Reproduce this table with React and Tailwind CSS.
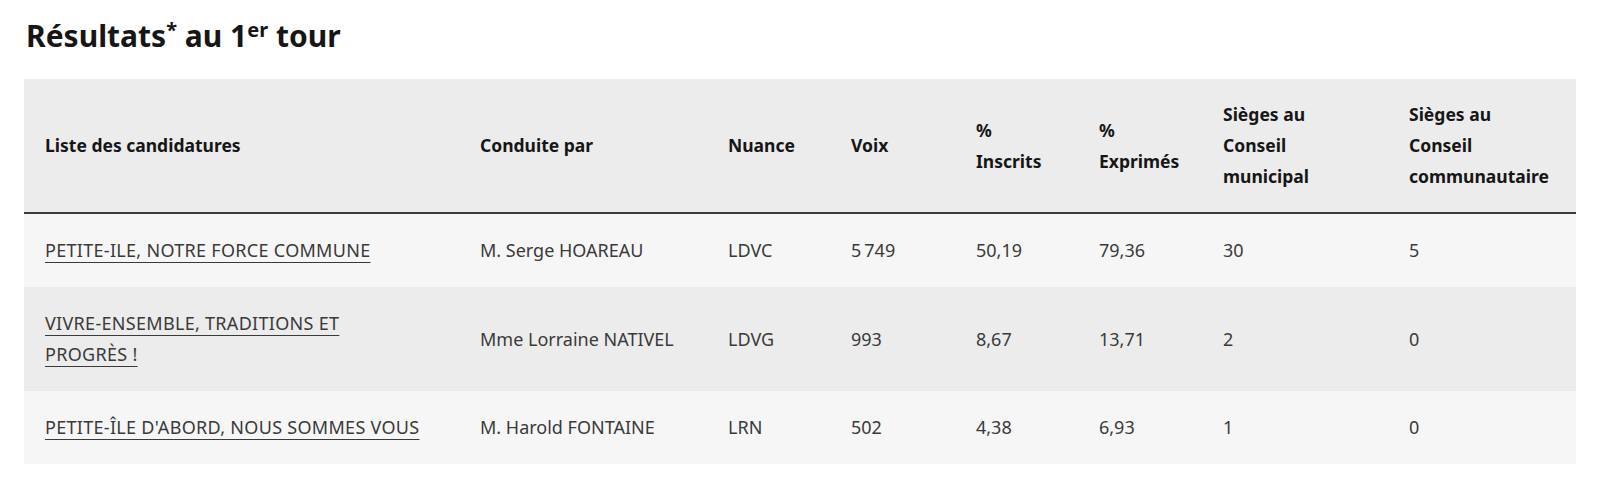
import React from "react"

const rows = [
  {
    liste: "PETITE-ILE, NOTRE FORCE COMMUNE",
    tete: "M. Serge HOAREAU",
    nuance: "LDVC",
    voix: "5\u202f749",
    inscrits: "50,19",
    exprimes: "79,36",
    cm: "30",
    cc: "5"
  },
  {
    liste: "VIVRE-ENSEMBLE, TRADITIONS ET PROGRÈS\u00a0!",
    tete: "Mme Lorraine NATIVEL",
    nuance: "LDVG",
    voix: "993",
    inscrits: "8,67",
    exprimes: "13,71",
    cm: "2",
    cc: "0"
  },
  {
    liste: "PETITE-ÎLE D'ABORD, NOUS SOMMES VOUS",
    tete: "M. Harold FONTAINE",
    nuance: "LRN",
    voix: "502",
    inscrits: "4,38",
    exprimes: "6,93",
    cm: "1",
    cc: "0"
  }
]

export default function App() {
  return (
    <div
      className="min-h-screen bg-white px-6 pt-[17px] text-[#161616]"
      style={{ fontFamily: '"Noto Sans", "Open Sans", Arial, sans-serif' }}
    >
      <h2 className="text-[30px] leading-[38px] font-bold mb-[24px] ml-[2px]">
        Résultats<sup className="text-[20px] font-bold">*</sup> au 1<sup className="text-[20px] font-bold">er</sup> tour
      </h2>

      <table className="w-full table-fixed border-collapse text-[18px] leading-[31px]">
        <colgroup>
          <col className="w-[435px]" />
          <col className="w-[248px]" />
          <col className="w-[123px]" />
          <col className="w-[125px]" />
          <col className="w-[123px]" />
          <col className="w-[124px]" />
          <col className="w-[186px]" />
          <col className="w-[188px]" />
        </colgroup>

        <thead>
          <tr className="bg-[#ececec] border-b-2 border-[#3a3a3a] text-left text-[#161616] text-[17.5px]">
            <th className="px-[21px] py-[20px] font-bold align-middle">Liste des candidatures</th>
            <th className="px-[21px] py-[20px] font-bold align-middle">Conduite par</th>
            <th className="px-[21px] py-[20px] font-bold align-middle">Nuance</th>
            <th className="px-[21px] py-[20px] font-bold align-middle">Voix</th>
            <th className="px-[21px] py-[20px] font-bold align-middle">%<br />Inscrits</th>
            <th className="px-[21px] py-[20px] font-bold align-middle">%<br />Exprimés</th>
            <th className="px-[21px] py-[20px] font-bold align-middle">Sièges au<br />Conseil<br />municipal</th>
            <th className="px-[21px] py-[20px] font-bold align-middle">Sièges au<br />Conseil<br />communautaire</th>
          </tr>
        </thead>

        <tbody className="text-[#3a3a3a]">
          {rows.map((r, i) => (
            <tr key={r.liste} className={i % 2 === 1 ? "bg-[#ececec]" : "bg-[#f6f6f6]"}>
              <td className="pl-[21px] pr-[31px] py-[21px] align-middle">
                <a href="#" className="underline decoration-1 underline-offset-[5px] tracking-[0.3px]">
                  {r.liste}
                </a>
              </td>
              <td className="px-[21px] py-[21px] align-middle">{r.tete}</td>
              <td className="px-[21px] py-[21px] align-middle">{r.nuance}</td>
              <td className="px-[21px] py-[21px] align-middle">{r.voix}</td>
              <td className="px-[21px] py-[21px] align-middle">{r.inscrits}</td>
              <td className="px-[21px] py-[21px] align-middle">{r.exprimes}</td>
              <td className="px-[21px] py-[21px] align-middle">{r.cm}</td>
              <td className="px-[21px] py-[21px] align-middle">{r.cc}</td>
            </tr>
          ))}
        </tbody>
      </table>
    </div>
  )
}
